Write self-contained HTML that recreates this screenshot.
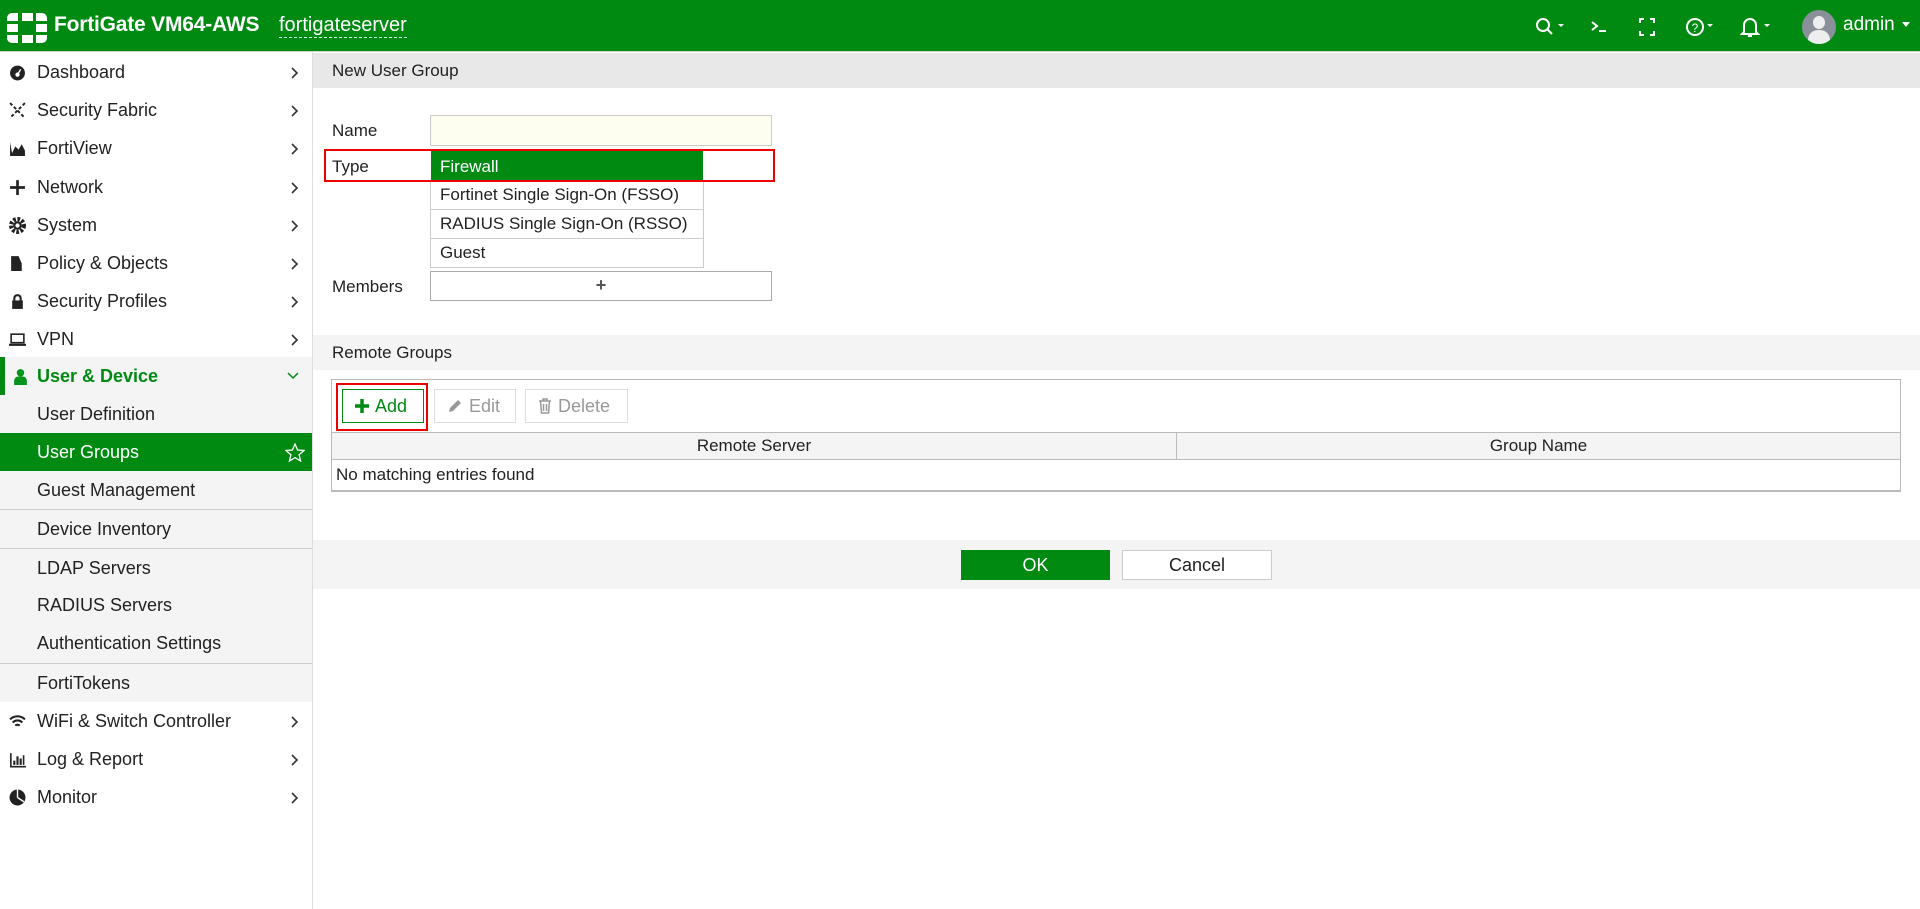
<!DOCTYPE html>
<html><head><meta charset="utf-8"><style>
*{box-sizing:border-box;margin:0;padding:0}
body{width:1920px;height:909px;overflow:hidden;background:#fff;font-family:"Liberation Sans",sans-serif;color:#222;position:relative}
.abs{position:absolute}
#hdr{left:0;top:0;width:1920px;height:52px;background:#008a12;border-bottom:1px solid #cfd8cf}
.logo div{position:absolute;background:#fff;width:11px;height:8px}
.side{left:0;top:52px;width:313px;height:857px;border-right:1px solid #ddd}
.it{position:absolute;left:0;width:312px;height:38px;font-size:18px;line-height:38px;padding-left:37px;color:#222}
.ch{position:absolute;left:291px;top:14px}
.ic{position:absolute;left:9px;top:11px;width:17px;height:17px}
.sub{background:#f4f4f4}
.sep{border-top:1px solid #ccc}
.lbl{font-size:17px}
.btn{position:absolute;border:1px solid #ddd;background:#fff;font-size:18px;color:#999;line-height:32px}
</style></head><body>
<div id="hdr" class="abs">
  <div class="abs logo" style="left:7px;top:13px;width:40px;height:30px">
    <div style="left:0;top:0;border-radius:5px 0 0 0"></div><div style="left:14.5px;top:0"></div><div style="left:29px;top:0;border-radius:0 5px 0 0"></div>
    <div style="left:0;top:11px"></div><div style="left:29px;top:11px"></div>
    <div style="left:0;top:22px;border-radius:0 0 0 5px"></div><div style="left:14.5px;top:22px"></div><div style="left:29px;top:22px;border-radius:0 0 5px 0"></div>
  </div>
  <div class="abs" style="left:54px;top:13px;color:#fff;font-size:21px;font-weight:bold;letter-spacing:-0.2px">FortiGate VM64-AWS</div>
  <div class="abs" style="left:279px;top:13px;color:#fff;font-size:20px;border-bottom:1px dashed #cfe;line-height:24px">fortigateserver</div>
  <svg class="abs" style="left:1530px;top:14px" width="300" height="26" viewBox="0 0 300 26" fill="none" stroke="#fff" stroke-width="2">
    <circle cx="13" cy="11" r="6"/><path d="M17 15l5 5"/><path d="M28 10l3 3 3-3z" fill="#fff" stroke="none"/>
    <path d="M62 8l5 4-5 4M69 17h7"/>
    <path d="M110 9V5h4M120 5h4v4M124 17v4h-4M114 21h-4v-4"/>
    <circle cx="165" cy="13" r="8"/><text x="165" y="18" font-size="12" fill="#fff" stroke="none" text-anchor="middle" font-family="Liberation Sans">?</text><path d="M177 10l3 3 3-3z" fill="#fff" stroke="none"/>
    <path d="M214 18V11a6 6 0 0 1 12 0v7l2 2h-16z M218 22h4"/><path d="M234 10l3 3 3-3z" fill="#fff" stroke="none"/>
  </svg>
  <div class="abs" style="left:1802px;top:10px;width:34px;height:34px;border-radius:50%;background:#8a9099;overflow:hidden">
    <div class="abs" style="left:11px;top:6px;width:12px;height:13px;border-radius:50%;background:#eee"></div>
    <div class="abs" style="left:6px;top:20px;width:22px;height:16px;border-radius:10px 10px 0 0;background:#eee"></div>
  </div>
  <div class="abs" style="left:1843px;top:14px;color:#fff;font-size:19px">admin</div>
  <svg class="abs" style="left:1902px;top:22px" width="10" height="6"><path d="M0 0h8l-4 5z" fill="#fff"/></svg>
</div>

<div class="abs side">
  <div class="it" style="top:1px"><svg class="ic" viewBox="0 0 16 16"><circle cx="8" cy="8.5" r="7" fill="#222"/><circle cx="8" cy="10" r="2" fill="#fff"/><path d="M8 10l3-5" stroke="#fff" stroke-width="1.3"/></svg>Dashboard<svg class="ch" width="8" height="12"><path d="M1 1l5 5-5 5" stroke="#333" stroke-width="1.6" fill="none"/></svg></div>
  <div class="it" style="top:39px"><svg class="ic" viewBox="0 0 16 16" stroke="#222" stroke-width="1.8" stroke-dasharray="3 2"><path d="M1 1l14 14M15 1L1 15"/></svg>Security Fabric<svg class="ch" width="8" height="12"><path d="M1 1l5 5-5 5" stroke="#333" stroke-width="1.6" fill="none"/></svg></div>
  <div class="it" style="top:77px"><svg class="ic" viewBox="0 0 16 16"><path d="M1 2v13h14v-2H3v-1l3-6 3 3 3-5 3 6v3H3z" fill="#222"/></svg>FortiView<svg class="ch" width="8" height="12"><path d="M1 1l5 5-5 5" stroke="#333" stroke-width="1.6" fill="none"/></svg></div>
  <div class="it" style="top:116px"><svg class="ic" viewBox="0 0 16 16" stroke="#222" stroke-width="2.5"><path d="M8 1v14M1 8h14"/></svg>Network<svg class="ch" width="8" height="12"><path d="M1 1l5 5-5 5" stroke="#333" stroke-width="1.6" fill="none"/></svg></div>
  <div class="it" style="top:154px"><svg class="ic" viewBox="0 0 16 16"><circle cx="8" cy="8" r="6" fill="none" stroke="#222" stroke-width="4" stroke-dasharray="2.5 1.5"/><circle cx="8" cy="8" r="4" fill="#222"/><circle cx="8" cy="8" r="2" fill="#fff"/></svg>System<svg class="ch" width="8" height="12"><path d="M1 1l5 5-5 5" stroke="#333" stroke-width="1.6" fill="none"/></svg></div>
  <div class="it" style="top:192px"><svg class="ic" viewBox="0 0 16 16"><path d="M2 1h7l3 7v7H2z" fill="#222"/></svg>Policy &amp; Objects<svg class="ch" width="8" height="12"><path d="M1 1l5 5-5 5" stroke="#333" stroke-width="1.6" fill="none"/></svg></div>
  <div class="it" style="top:230px"><svg class="ic" viewBox="0 0 16 16"><rect x="3" y="7" width="10" height="8" fill="#222"/><path d="M5 7V5a3 3 0 0 1 6 0v2" stroke="#222" stroke-width="2" fill="none"/></svg>Security Profiles<svg class="ch" width="8" height="12"><path d="M1 1l5 5-5 5" stroke="#333" stroke-width="1.6" fill="none"/></svg></div>
  <div class="it" style="top:268px"><svg class="ic" viewBox="0 0 16 16"><rect x="2" y="3" width="12" height="8" fill="none" stroke="#222" stroke-width="1.5"/><path d="M0 13h16" stroke="#222" stroke-width="2"/></svg>VPN<svg class="ch" width="8" height="12"><path d="M1 1l5 5-5 5" stroke="#333" stroke-width="1.6" fill="none"/></svg></div>
  <div class="abs sub" style="left:0;top:305px;width:312px;height:345px"></div>
  <div class="abs" style="left:0;top:305px;width:5px;height:38px;background:#008a12"></div>
  <div class="it" style="top:305px;color:#008a12;font-weight:bold"><svg class="ic" viewBox="0 0 16 16" style="left:12px"><circle cx="8" cy="4.5" r="3.5" fill="#00941a"/><path d="M2 16v-4a4 4 0 0 1 4-4h4a4 4 0 0 1 4 4v4z" fill="#00941a"/></svg>User &amp; Device<svg class="abs" style="left:287px;top:15px" width="12" height="8"><path d="M1 1l5 5 5-5" stroke="#008a12" stroke-width="1.5" fill="none"/></svg></div>
  <div class="it" style="top:343px">User Definition</div>
  <div class="abs" style="left:0;top:381px;width:312px;height:38px;background:#008a12"></div>
  <div class="it" style="top:381px;color:#fff">User Groups<svg class="abs" style="left:285px;top:10px" width="20" height="19" viewBox="0 0 20 19"><path d="M10 1l2.6 6 6.4.5-4.9 4.2 1.5 6.3L10 14.6 4.4 18l1.5-6.3L1 7.5l6.4-.5z" fill="none" stroke="#fff" stroke-width="1.3"/></svg></div>
  <div class="it" style="top:419px">Guest Management</div>
  <div class="it sep" style="top:457px;height:39px">Device Inventory</div>
  <div class="it sep" style="top:496px">LDAP Servers</div>
  <div class="it" style="top:534px">RADIUS Servers</div>
  <div class="it" style="top:572px">Authentication Settings</div>
  <div class="it sep" style="top:611px;height:39px">FortiTokens</div>
  <div class="it" style="top:650px"><svg class="ic" viewBox="0 0 16 16" fill="none" stroke="#222" stroke-width="2"><path d="M1 6a10 10 0 0 1 14 0M3.5 9a6 6 0 0 1 9 0M6 12a2.5 2.5 0 0 1 4 0"/></svg>WiFi &amp; Switch Controller<svg class="ch" width="8" height="12"><path d="M1 1l5 5-5 5" stroke="#333" stroke-width="1.6" fill="none"/></svg></div>
  <div class="it" style="top:688px"><svg class="ic" viewBox="0 0 16 16" fill="#222"><path d="M1 2h1.5v12H16v1.5H1z M4 9h2v4H4zM7 5h2v8H7zM10 7h2v6h-2zM13 4h1.5v9H13z"/></svg>Log &amp; Report<svg class="ch" width="8" height="12"><path d="M1 1l5 5-5 5" stroke="#333" stroke-width="1.6" fill="none"/></svg></div>
  <div class="it" style="top:726px"><svg class="ic" viewBox="0 0 16 16"><circle cx="8" cy="8" r="7.5" fill="#222"/><path d="M8 8V0.5M8 8l6 4" stroke="#fff" stroke-width="1.3"/></svg>Monitor<svg class="ch" width="8" height="12"><path d="M1 1l5 5-5 5" stroke="#333" stroke-width="1.6" fill="none"/></svg></div>
</div>

<div class="abs" style="left:313px;top:53px;width:1607px;height:35px;background:#e8e8e8"></div>
<div class="abs lbl" style="left:332px;top:61px">New User Group</div>
<div class="abs lbl" style="left:332px;top:121px">Name</div>
<div class="abs" style="left:430px;top:115px;width:342px;height:31px;background:#fefef0;border:1px solid #ccc"></div>
<div class="abs lbl" style="left:332px;top:157px">Type</div>
<div class="abs" style="left:430px;top:181px;width:274px;height:87px;border:1px solid #ccc;background:#fff"></div>
<div class="abs" style="left:430px;top:209px;width:274px;height:1px;background:#ccc"></div>
<div class="abs" style="left:430px;top:238px;width:274px;height:1px;background:#ccc"></div>
<div class="abs" style="left:431px;top:151px;width:272px;height:30px;background:#008a12"></div>
<div class="abs lbl" style="left:440px;top:157px;color:#fff">Firewall</div>
<div class="abs lbl" style="left:440px;top:185px">Fortinet Single Sign-On (FSSO)</div>
<div class="abs lbl" style="left:440px;top:214px">RADIUS Single Sign-On (RSSO)</div>
<div class="abs lbl" style="left:440px;top:243px">Guest</div>
<div class="abs" style="left:324px;top:149px;width:451px;height:33px;border:2px solid #e00"></div>
<div class="abs lbl" style="left:332px;top:277px">Members</div>
<div class="abs" style="left:430px;top:271px;width:342px;height:30px;border:1px solid #aaa;text-align:center;font-size:18px;line-height:27px;color:#555;font-weight:bold">+</div>

<div class="abs" style="left:313px;top:335px;width:1607px;height:35px;background:#f4f4f4"></div>
<div class="abs lbl" style="left:332px;top:343px">Remote Groups</div>
<div class="abs" style="left:331px;top:379px;width:1570px;height:113px;border:1px solid #bbb;border-bottom:2px solid #bbb"></div>
<div class="abs" style="left:336px;top:383px;width:92px;height:48px;border:2px solid #e00"></div>
<div class="btn" style="left:342px;top:389px;width:82px;height:34px;border-color:#008a12;color:#008a12;padding-left:12px"><svg width="14" height="14" style="vertical-align:-1px;margin-right:6px"><path d="M7 0v14M0 7h14" stroke="#008a12" stroke-width="3.5"/></svg>Add</div>
<div class="btn" style="left:434px;top:389px;width:82px;height:34px;padding-left:12px"><svg width="16" height="16" style="vertical-align:-2px;margin-right:6px" viewBox="0 0 16 16"><path d="M2 14l1-4 8-8 3 3-8 8z" fill="#999"/></svg>Edit</div>
<div class="btn" style="left:525px;top:389px;width:103px;height:34px;padding-left:12px"><svg width="14" height="16" style="vertical-align:-2px;margin-right:6px" viewBox="0 0 14 16" fill="none" stroke="#999" stroke-width="1.5"><path d="M1 3h12M5 3V1h4v2M2.5 3l1 12h7l1-12M5.5 6v7M8.5 6v7"/></svg>Delete</div>
<div class="abs" style="left:332px;top:432px;width:1568px;height:28px;background:#f4f4f4;border-top:1px solid #bbb;border-bottom:1px solid #bbb"></div>
<div class="abs" style="left:1176px;top:432px;width:1px;height:28px;background:#bbb"></div>
<div class="abs lbl" style="left:332px;top:436px;width:844px;text-align:center">Remote Server</div>
<div class="abs lbl" style="left:1177px;top:436px;width:723px;text-align:center">Group Name</div>
<div class="abs lbl" style="left:336px;top:465px">No matching entries found</div>

<div class="abs" style="left:313px;top:540px;width:1607px;height:49px;background:#f4f4f4"></div>
<div class="abs" style="left:961px;top:550px;width:149px;height:30px;background:#008a12;color:#fff;text-align:center;line-height:30px;font-size:18px">OK</div>
<div class="abs" style="left:1122px;top:550px;width:150px;height:30px;background:#fff;border:1px solid #ccc;text-align:center;line-height:28px;font-size:18px">Cancel</div>
</body></html>
